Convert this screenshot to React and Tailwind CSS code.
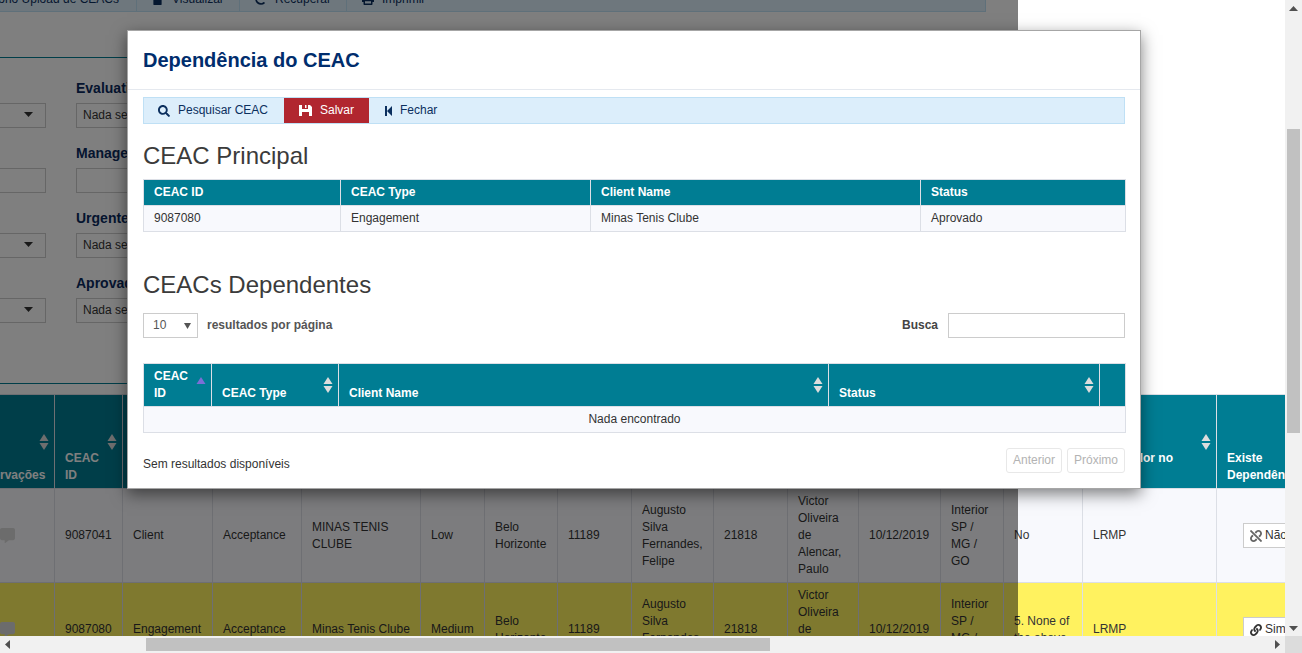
import React from 'react'
import { FaSearch, FaLink, FaUnlink, FaCommentAlt, FaFile, FaRedo, FaPrint } from 'react-icons/fa'

const bgCols = [95, 68, 90, 89, 119, 64, 73, 74, 82, 74, 71, 82, 63, 79, 134, 114]
const bgHeaders = [
  'Observações', 'CEAC ID', 'CEAC Type', 'Evaluation', 'Client Name', 'Risk', 'Office', 'Partner ID', 'Partner Name',
  'Manager ID', 'Manager Name', 'Data', 'Região', 'Pergunta', 'Fator valor no', 'Existe Dependência',
]
const rows = [
  {
    bg: 'bg-[#f8f9fd]', dep: 'Não', icon: <FaUnlink className="text-[12px] text-[#666]" />,
    cells: ['9087041', 'Client', 'Acceptance', 'MINAS TENIS CLUBE', 'Low', 'Belo Horizonte', '11189', 'Augusto Silva Fernandes, Felipe', '21818', 'Victor Oliveira de Alencar, Paulo', '10/12/2019', 'Interior SP / MG / GO', 'No', 'LRMP'],
  },
  {
    bg: 'bg-[#fff25f]', dep: 'Sim', icon: <FaLink className="text-[12px] text-[#333]" />,
    cells: ['9087080', 'Engagement', 'Acceptance', 'Minas Tenis Clube', 'Medium', 'Belo Horizonte', '11189', 'Augusto Silva Fernandes, Felipe', '21818', 'Victor Oliveira de Alencar, Paulo', '10/12/2019', 'Interior SP / MG / GO', '5. None of the above', 'LRMP'],
  },
]

function SortIcon({ active }) {
  if (active) {
    return <svg width="10" height="7" viewBox="0 0 10 7" className="absolute right-[5px] top-[13px]"><path d="M5 0l4.5 7H.5z" fill="#7b6fd6" /></svg>
  }
  return (
    <svg width="10" height="16" viewBox="0 0 10 16" className="absolute right-[5px] top-1/2 -translate-y-1/2">
      <path d="M5 0l4.5 7H.5z" fill="#dddddd" />
      <path d="M5 16L.5 9h9z" fill="#dddddd" />
    </svg>
  )
}

function Caret() {
  return <svg width="9" height="5" viewBox="0 0 9 5"><path d="M0 0h9L4.5 5z" fill="#333" /></svg>
}

function Field({ label, select, text }) {
  return (
    <div>
      <div className="h-[19px] mb-[5px] text-[14px] leading-[19px] font-bold text-[#0a2a5e] whitespace-nowrap">{label}</div>
      <div className="h-[25px] border border-[#cccccc] bg-white flex items-center justify-between pl-[6px] pr-[12px] pb-[2px] text-[12px] text-[#333] whitespace-nowrap">
        <span>{text}</span>
        {select && <Caret />}
      </div>
    </div>
  )
}

function FormRow({ select, label, text }) {
  return (
    <div className="grid grid-cols-[87px_200px] gap-x-[30px]">
      <Field select={select} />
      <Field label={label} select={select} text={text} />
    </div>
  )
}

function BackgroundPage() {
  return (
    <div className="w-[1371px] -ml-[41px]">
      <div className="w-[1027px] h-3 bg-[#dceefb] border-b border-r border-[#bfe0f5] overflow-hidden">
        <div className="flex -mt-[14px] h-[26px] text-[12px] text-[#0b2f5e]">
          <div className="w-[178px] shrink-0 flex items-center justify-end pr-[17px] border-r border-[#bfe0f5] whitespace-nowrap">Relatório Upload de CEACs</div>
          <div className="w-[103px] flex items-center gap-[9px] pl-[15px] border-r border-[#bfe0f5]"><FaFile className="text-[11px]" />Visualizar</div>
          <div className="w-[107px] flex items-center gap-2 pl-[15px] border-r border-[#bfe0f5]"><FaRedo className="text-[12px]" />Recuperar</div>
          <div className="flex items-center gap-2 pl-[15px]"><FaPrint className="text-[12px]" />Imprimir</div>
        </div>
      </div>

      <div className="w-[1100px] mt-[45px] border-y border-[#007d93] pt-[21px] pb-[60px] flex flex-col gap-4">
        <FormRow select label="Evaluation" text="Nada selecionado" />
        <FormRow label="Manager" />
        <FormRow select label="Urgente?" text="Nada selecionado" />
        <FormRow select label="Aprovado" text="Nada selecionado" />
      </div>

      <table className="mt-[10px] table-fixed w-[1371px] border-collapse text-[12px] leading-[17px] text-[#333]">
        <colgroup>
          {bgCols.map((w, i) => <col key={i} style={{ width: w }} />)}
        </colgroup>
        <thead>
          <tr>
            {bgHeaders.map((h, i) => (
              <th key={h} className="relative bg-[#007d93] text-white font-bold text-left align-bottom border border-[#dcdfe6] pl-[10px] pr-[16px] py-1 h-[94px]">
                {h}
                {i === 14 && <><br />&nbsp;</>}
                <SortIcon />
              </th>
            ))}
          </tr>
        </thead>
        <tbody>
          {rows.map(r => (
            <tr key={r.cells[0]} className={r.bg}>
              <td className="border border-[#dcdfe6] text-center py-1 text-[#d8d8d8]">
                <FaCommentAlt className="inline text-[15px]" />
              </td>
              {r.cells.map((c, i) => (
                <td key={i} className="border border-[#dcdfe6] px-[10px] py-1 align-middle">{c}</td>
              ))}
              <td className="border border-[#dcdfe6] pl-[26px] py-1">
                <span className="inline-flex items-center gap-[3px] h-[25px] w-[62px] pl-[6px] bg-white border border-[#cccccc]">
                  {r.icon}{r.dep}
                </span>
              </td>
            </tr>
          ))}
        </tbody>
      </table>
    </div>
  )
}

function Modal() {
  return (
    <div className="absolute left-[127px] top-[30px] w-[1014px] h-[459px] bg-white border border-[#a6a6a6] shadow-[0_5px_15px_rgba(0,0,0,0.5)] text-[12px] leading-[17px] text-[#333]">
      <div className="h-[59px] border-b border-[#e5e9ef] px-[15px] flex items-center">
        <h2 className="text-[20px] font-bold text-[#002d6d]">Dependência do CEAC</h2>
      </div>

      <div className="px-[15px]">
        <div className="mt-[7px] h-[27px] flex bg-[#dceefb] border border-[#bfe0f5] text-[#0b2f5e]">
          <button className="w-[140px] flex items-center pl-[14px] gap-[8px]"><FaSearch className="text-[12px]" />Pesquisar CEAC</button>
          <button className="w-[85px] flex items-center pl-[15px] gap-[8px] bg-[#b1262f] text-white">
            <svg width="13" height="11" viewBox="0 0 13 11">
              <path fillRule="evenodd" fill="#fff" d="M0 0h11l2 2v9H0zM3 0v4h6V0h-1.500v3H6V0zM3 7v4h7V7z" />
            </svg>
            Salvar
          </button>
          <button className="flex items-center pl-[16px] gap-[8px]">
            <svg width="7" height="10" viewBox="0 0 7 10"><path d="M0 0h2v10H0zM7 0v10L2 5z" fill="#0b2f5e" /></svg>
            Fechar
          </button>
        </div>

        <h3 className="mt-[19px] mb-[10px] text-[24px] leading-[26px] text-[#3b3b3b]">CEAC Principal</h3>
        <table className="w-[982px] table-fixed border-collapse">
          <colgroup>
            <col className="w-[197px]" /><col className="w-[250px]" /><col className="w-[330px]" /><col className="w-[205px]" />
          </colgroup>
          <thead>
            <tr className="bg-[#007d93] text-white font-bold text-left">
              <th className="border border-[#dcdfe6] px-[10px] py-1">CEAC ID</th>
              <th className="border border-[#dcdfe6] px-[10px] py-1">CEAC Type</th>
              <th className="border border-[#dcdfe6] px-[10px] py-1">Client Name</th>
              <th className="border border-[#dcdfe6] px-[10px] py-1">Status</th>
            </tr>
          </thead>
          <tbody>
            <tr className="bg-[#f8f9fd]">
              <td className="border border-[#dcdfe6] px-[10px] py-1">9087080</td>
              <td className="border border-[#dcdfe6] px-[10px] py-1">Engagement</td>
              <td className="border border-[#dcdfe6] px-[10px] py-1">Minas Tenis Clube</td>
              <td className="border border-[#dcdfe6] px-[10px] py-1">Aprovado</td>
            </tr>
          </tbody>
        </table>

        <h3 className="mt-10 mb-[15px] text-[24px] leading-[26px] text-[#3b3b3b]">CEACs Dependentes</h3>
        <div className="flex items-center justify-between">
          <div className="flex items-center gap-[9px]">
            <div className="w-[55px] h-[25px] border border-[#cccccc] flex items-center justify-between pl-[9px] pr-[6px] text-[#555]">
              10
              <svg width="7" height="6" viewBox="0 0 7 6"><path d="M0 0h7L3.500 6z" fill="#555" /></svg>
            </div>
            <span className="font-bold text-[#555]">resultados por página</span>
          </div>
          <div className="flex items-center gap-[10px]">
            <span className="font-bold text-[#444]">Busca</span>
            <div className="w-[177px] h-[25px] border border-[#cccccc]" />
          </div>
        </div>

        <table className="mt-[25px] w-[982px] table-fixed border-collapse">
          <colgroup>
            <col className="w-[68px]" /><col className="w-[127px]" /><col className="w-[490px]" /><col className="w-[271px]" /><col className="w-[26px]" />
          </colgroup>
          <thead>
            <tr className="bg-[#007d93] text-white font-bold text-left align-bottom">
              <th className="relative border border-[#dcdfe6] pl-[10px] pr-[16px] py-1">CEAC ID<SortIcon active /></th>
              <th className="relative border border-[#dcdfe6] pl-[10px] pr-[16px] py-1">CEAC Type<SortIcon /></th>
              <th className="relative border border-[#dcdfe6] pl-[10px] pr-[16px] py-1">Client Name<SortIcon /></th>
              <th className="relative border border-[#dcdfe6] pl-[10px] pr-[16px] py-1">Status<SortIcon /></th>
              <th className="border border-[#dcdfe6]" />
            </tr>
          </thead>
          <tbody>
            <tr className="bg-[#f8f9fd]">
              <td colSpan={5} className="border border-[#dcdfe6] text-center py-1">Nada encontrado</td>
            </tr>
          </tbody>
        </table>

        <div className="mt-[15px] flex items-start justify-between">
          <span className="pt-[8px]">Sem resultados disponíveis</span>
          <div className="flex gap-[5px] text-[#b3b3b3]">
            <div className="w-[56px] h-[25px] flex items-center justify-center border border-[#e8e8e8] rounded-[3px]">Anterior</div>
            <div className="w-[58px] h-[25px] flex items-center justify-center border border-[#e8e8e8] rounded-[3px]">Próximo</div>
          </div>
        </div>
      </div>
    </div>
  )
}

export default function App() {
  return (
    <div className="w-[1302px] h-[653px] flex overflow-hidden bg-white font-['Liberation_Sans',Arial,sans-serif]">
      <div className="w-[1285px] flex flex-col">
        <div className="relative flex-1 overflow-hidden">
          <BackgroundPage />
          <div className="absolute left-0 top-0 bottom-0 w-[1018px] bg-black/50" />
          <Modal />
        </div>
        <div className="h-[17px] shrink-0 bg-[#f1f1f1] flex items-center">
          <svg width="17" height="17" viewBox="0 0 17 17"><path d="M5 8.500L10 4v9z" fill="#505050" /></svg>
          <div className="ml-[129px] w-[624px] h-[13px] bg-[#c1c1c1]" />
          <svg width="17" height="17" viewBox="0 0 17 17" className="ml-auto"><path d="M12 8.500L7 4v9z" fill="#505050" /></svg>
        </div>
      </div>
      <div className="w-[17px] shrink-0 flex flex-col bg-[#f1f1f1]">
        <svg width="17" height="17" viewBox="0 0 17 17"><path d="M8.500 6L13 11H4z" fill="#505050" /></svg>
        <div className="ml-[2px] mt-[112px] w-[13px] h-[304px] bg-[#c1c1c1]" />
        <svg width="17" height="17" viewBox="0 0 17 17" className="mt-auto"><path d="M8.500 12L4 7h9z" fill="#505050" /></svg>
        <div className="h-[17px] shrink-0 bg-[#dcdcdc]" />
      </div>
    </div>
  )
}
